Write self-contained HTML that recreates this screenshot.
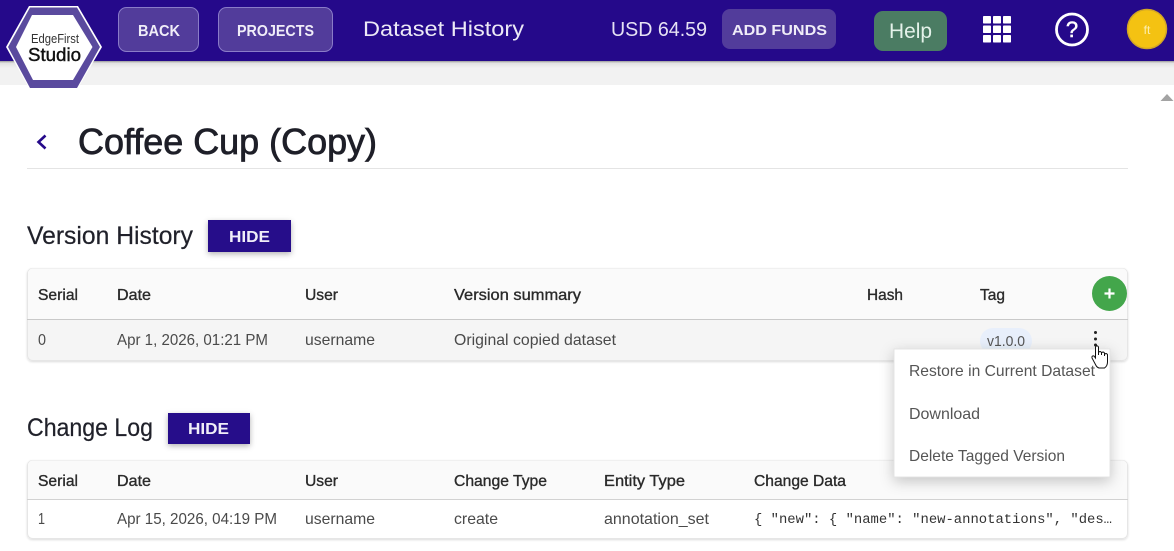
<!DOCTYPE html>
<html><head><meta charset="utf-8"><title>Dataset History</title>
<style>
html,body{margin:0;padding:0;background:#fff;width:1174px;height:551px;overflow:hidden}
svg{display:block}
text{font-family:"Liberation Sans",sans-serif}
.h{font-size:16px;fill:#2a2a2a;stroke:#2a2a2a;stroke-width:.35}
.c{font-size:16px;fill:#4a4a4a}
.m{font-size:16px;fill:#555}
.b{font-weight:bold;fill:#f0edf8;font-size:16px}
.t{fill:#20212a;font-size:25px;stroke:#20212a;stroke-width:.2}
.mono{font-family:"Liberation Mono",monospace;font-size:13.5px;fill:#333}
</style></head><body>
<svg width="1174" height="551" viewBox="0 0 1174 551" xmlns="http://www.w3.org/2000/svg">
<defs>
<filter id="s1" x="-20%" y="-30%" width="140%" height="170%"><feDropShadow dx="0" dy="2" stdDeviation="3" flood-color="#000" flood-opacity=".3"/></filter>
<filter id="s2" x="-10%" y="-10%" width="125%" height="130%"><feDropShadow dx="0" dy="4" stdDeviation="7" flood-color="#000" flood-opacity=".22"/></filter>
<filter id="s3" x="-3%" y="-10%" width="106%" height="125%"><feDropShadow dx="0" dy="1" stdDeviation="1" flood-color="#000" flood-opacity=".14"/></filter>
<linearGradient id="g" x1="0" y1="0" x2="0" y2="1"><stop offset="0" stop-color="#9a9a9a"/><stop offset=".3" stop-color="#e2e2e2"/><stop offset="1" stop-color="#f2f2f2"/></linearGradient>
</defs>

<rect x="0" y="61" width="1174" height="24" fill="#f2f2f2"/>
<rect x="0" y="61" width="1174" height="7" fill="url(#g)"/>
<rect x="0" y="0" width="1174" height="61" fill="#25098a"/>

<polygon points="6,47 29,6 78,6 102,47 78,88 29,88" fill="#fff"/>
<polygon points="8,47 30,7.500 77,7.500 100,47 77,88 30,88" fill="#5a4a9e"/>
<polygon points="16,47 32,15 73,15 92.500,47 73,80 33,80" fill="#fff"/>
<text x="31" y="43" font-size="13" fill="#333" textLength="48" lengthAdjust="spacingAndGlyphs">EdgeFirst</text>
<text x="28" y="61" font-size="18" fill="#111" stroke="#111" stroke-width=".4" textLength="53" lengthAdjust="spacingAndGlyphs">Studio</text>

<rect x="118.500" y="7.500" width="80" height="44" rx="8" fill="#523c9b" stroke="#8a7cc8"/>
<text class="b" x="138" y="36" textLength="42" lengthAdjust="spacingAndGlyphs">BACK</text>
<rect x="218.500" y="7.500" width="114" height="44" rx="8" fill="#523c9b" stroke="#8a7cc8"/>
<text class="b" x="237" y="36" textLength="77" lengthAdjust="spacingAndGlyphs">PROJECTS</text>
<text x="363" y="36" font-size="21.500" fill="#ece9f6" textLength="161" lengthAdjust="spacingAndGlyphs">Dataset History</text>
<text x="611" y="36" font-size="20.500" fill="#e6e2f4" textLength="96" lengthAdjust="spacingAndGlyphs">USD 64.59</text>
<rect x="722" y="9" width="114" height="40" rx="8" fill="#523c9b"/>
<text class="b" x="732" y="35" style="font-size:15px" textLength="95" lengthAdjust="spacingAndGlyphs">ADD FUNDS</text>
<rect x="874" y="11" width="73" height="40" rx="9" fill="#4b7c63"/>
<text x="889" y="38" font-size="21.500" fill="#e4f2ea" textLength="43" lengthAdjust="spacingAndGlyphs">Help</text>

<g fill="#fff">
<rect x="983" y="16" width="8" height="7.500" rx=".8"/><rect x="993" y="16" width="8" height="7.500" rx=".8"/><rect x="1003" y="16" width="8" height="7.500" rx=".8"/>
<rect x="983" y="25.500" width="8" height="7.500" rx=".8"/><rect x="993" y="25.500" width="8" height="7.500" rx=".8"/><rect x="1003" y="25.500" width="8" height="7.500" rx=".8"/>
<rect x="983" y="35" width="8" height="7.500" rx=".8"/><rect x="993" y="35" width="8" height="7.500" rx=".8"/><rect x="1003" y="35" width="8" height="7.500" rx=".8"/>
</g>
<circle cx="1072" cy="29.500" r="15.500" fill="none" stroke="#fff" stroke-width="2.800"/>
<text x="1072" y="37" font-size="22" fill="#fff" stroke="#fff" stroke-width=".5" text-anchor="middle">?</text>
<circle cx="1147" cy="29" r="19.500" fill="#f4c212" stroke="#d2a526" stroke-width="1.500"/>
<text x="1147" y="34" font-size="12" fill="#fbeeb0" text-anchor="middle">ft</text>

<polygon points="1160.500,101 1167,94 1173.500,101" fill="#a3a3a3"/>

<path d="M45.500 135.500 L38.500 142 L45.500 148.500" fill="none" stroke="#25098a" stroke-width="2.600"/>
<text x="78" y="154" font-size="36" fill="#1e1f28" stroke="#1e1f28" stroke-width=".8" textLength="299" lengthAdjust="spacingAndGlyphs">Coffee Cup (Copy)</text>
<rect x="27" y="168" width="1101" height="1" fill="#e4e4e4"/>

<text class="t" x="27" y="244" textLength="166" lengthAdjust="spacingAndGlyphs">Version History</text>
<rect x="208" y="220" width="83" height="32" fill="#25098a" filter="url(#s1)"/>
<text class="b" x="229" y="242" textLength="41" lengthAdjust="spacingAndGlyphs">HIDE</text>

<rect x="27.500" y="268.500" width="1100" height="92" rx="5" fill="#f5f5f5" stroke="#e6e6e6" filter="url(#s3)"/>
<path d="M28 319 V273 a4.500 4.500 0 0 1 4.500 -4.500 H1122.500 a4.500 4.500 0 0 1 4.500 4.500 V319 Z" fill="#fafafa"/>
<rect x="27" y="319" width="1101" height="1" fill="#c9c9c9"/>
<text class="h" x="38" y="300" textLength="40" lengthAdjust="spacingAndGlyphs">Serial</text>
<text class="h" x="117" y="300" textLength="34" lengthAdjust="spacingAndGlyphs">Date</text>
<text class="h" x="305" y="300" textLength="33" lengthAdjust="spacingAndGlyphs">User</text>
<text class="h" x="454" y="300" textLength="127" lengthAdjust="spacingAndGlyphs">Version summary</text>
<text class="h" x="867" y="300" textLength="36" lengthAdjust="spacingAndGlyphs">Hash</text>
<text class="h" x="980" y="300" textLength="25" lengthAdjust="spacingAndGlyphs">Tag</text>
<circle cx="1109.500" cy="293.500" r="17.500" fill="#43a64b"/>
<path d="M1109.500 288.500 V298.500 M1104.500 293.500 H1114.500" stroke="#fff" stroke-width="2.200"/>
<text class="c" x="38" y="345" textLength="8" lengthAdjust="spacingAndGlyphs">0</text>
<text class="c" x="117" y="345" textLength="151" lengthAdjust="spacingAndGlyphs">Apr 1, 2026, 01:21 PM</text>
<text class="c" x="305" y="345" textLength="70" lengthAdjust="spacingAndGlyphs">username</text>
<text class="c" x="454" y="345" textLength="162" lengthAdjust="spacingAndGlyphs">Original copied dataset</text>
<rect x="980" y="328" width="52" height="26" rx="13" fill="#e8effb"/>
<text x="987" y="346" font-size="15" fill="#555" textLength="38" lengthAdjust="spacingAndGlyphs">v1.0.0</text>
<circle cx="1095.500" cy="332.500" r="1.500" fill="#222"/><circle cx="1095.500" cy="339" r="1.500" fill="#222"/><circle cx="1095.500" cy="345" r="1.500" fill="#222"/>

<text class="t" x="27" y="436" textLength="126" lengthAdjust="spacingAndGlyphs">Change Log</text>
<rect x="168" y="413" width="82" height="31" fill="#25098a" filter="url(#s1)"/>
<text class="b" x="188" y="434" textLength="41" lengthAdjust="spacingAndGlyphs">HIDE</text>

<rect x="27.500" y="460.500" width="1100" height="78" rx="5" fill="#fff" stroke="#e6e6e6" filter="url(#s3)"/>
<path d="M28 499 V465 a4.500 4.500 0 0 1 4.500 -4.500 H1122.500 a4.500 4.500 0 0 1 4.500 4.500 V499 Z" fill="#fafafa"/>
<rect x="27" y="499" width="1101" height="1" fill="#d2d2d2"/>
<text class="h" x="38" y="486" textLength="40" lengthAdjust="spacingAndGlyphs">Serial</text>
<text class="h" x="117" y="486" textLength="34" lengthAdjust="spacingAndGlyphs">Date</text>
<text class="h" x="305" y="486" textLength="33" lengthAdjust="spacingAndGlyphs">User</text>
<text class="h" x="454" y="486" textLength="93" lengthAdjust="spacingAndGlyphs">Change Type</text>
<text class="h" x="604" y="486" textLength="81" lengthAdjust="spacingAndGlyphs">Entity Type</text>
<text class="h" x="754" y="486" textLength="92" lengthAdjust="spacingAndGlyphs">Change Data</text>
<text class="c" x="38" y="524" textLength="7" lengthAdjust="spacingAndGlyphs">1</text>
<text class="c" x="117" y="524" textLength="160" lengthAdjust="spacingAndGlyphs">Apr 15, 2026, 04:19 PM</text>
<text class="c" x="305" y="524" textLength="70" lengthAdjust="spacingAndGlyphs">username</text>
<text class="c" x="454" y="524" textLength="44" lengthAdjust="spacingAndGlyphs">create</text>
<text class="c" x="604" y="524" textLength="105" lengthAdjust="spacingAndGlyphs">annotation_set</text>
<text class="mono" x="754" y="523" textLength="358" lengthAdjust="spacingAndGlyphs">{ "new": { "name": "new-annotations", "des…</text>

<rect x="894" y="349" width="216" height="128" fill="#fff" stroke="#e0e0e0" stroke-width=".8" filter="url(#s2)"/>
<text class="m" x="909" y="376" textLength="186" lengthAdjust="spacingAndGlyphs">Restore in Current Dataset</text>
<text class="m" x="909" y="419" textLength="71" lengthAdjust="spacingAndGlyphs">Download</text>
<text class="m" x="909" y="461" textLength="156" lengthAdjust="spacingAndGlyphs">Delete Tagged Version</text>

<path d="M1095.500 347 q1.500 -2.500 3 0 V355 V352.500 q1.500 -2 3 0 V355 V353 q1.500 -2 3 0 V356 V354.500 q1.500 -2 3 0 V362 q0 4 -3 6 H1099 q-2 -.5 -3 -2.500 L1092 358 q-.5 -2.500 2 -2 L1095.500 358 Z" fill="#fff" stroke="#111" stroke-width="1"/>
</svg>
</body></html>
